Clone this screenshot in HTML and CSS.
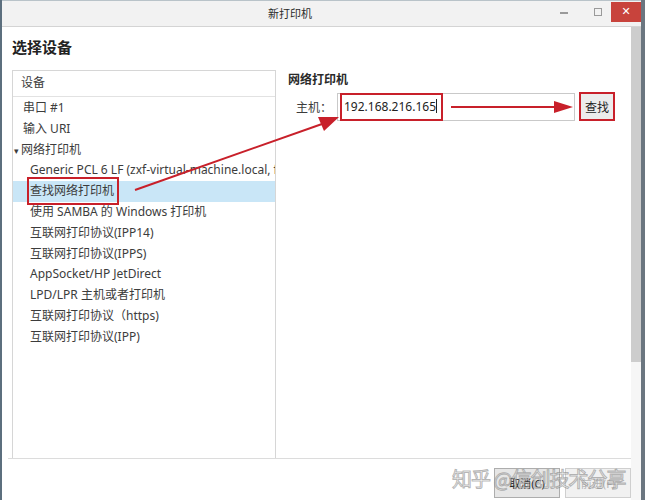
FILE: index.html
```html
<!DOCTYPE html>
<html lang="zh-CN">
<head>
	<meta charset="UTF-8">
	<title>新打印机</title>
	<link rel="stylesheet" href="styles.css">
</head>
<body>
<div class="window">
	<div class="titlebar">
		<span class="title">新打印机</span>
		<div class="controls">
			<span class="ctl ctl-min"></span>
			<span class="ctl ctl-max"></span>
			<span class="ctl ctl-close">✕</span>
		</div>
	</div>
	<div class="client">
		<div class="main">
			<h1 class="heading">选择设备</h1>
			<div class="panes">
				<div class="devices">
					<div class="devices-head">设备</div>
					<ul class="device-list">
						<li>串口 #1</li>
						<li>输入 URI</li>
						<li class="group"><span class="tri">▾</span>网络打印机</li>
						<li class="child">Generic PCL 6 LF (zxf-virtual-machine.local, fe</li>
						<li class="child selected"><span class="mark">查找网络打印机</span></li>
						<li class="child">使用 SAMBA 的 Windows 打印机</li>
						<li class="child">互联网打印协议(IPP14)</li>
						<li class="child">互联网打印协议(IPPS)</li>
						<li class="child">AppSocket/HP JetDirect</li>
						<li class="child">LPD/LPR 主机或者打印机</li>
						<li class="child">互联网打印协议（https)</li>
						<li class="child">互联网打印协议(IPP)</li>
					</ul>
				</div>
				<div class="detail">
					<h2 class="detail-tit">网络打印机</h2>
					<div class="host-row">
						<label class="host-label">主机：</label>
						<div class="host-input"><span class="host-mark">192.168.216.165<i class="caret"></i></span></div>
						<button class="find">查找</button>
					</div>
				</div>
			</div>
			<div class="footer">
				<button class="btn">取消(C)</button>
				<button class="btn btn-off">前进(F)</button>
			</div>
		</div>
		<div class="scrollbar"><div class="thumb"></div></div>
	</div>

	<!-- 标注箭头 -->
	<svg class="arrows" width="645" height="500" viewBox="0 0 645 500">
		<line x1="135" y1="190" x2="322" y2="124" stroke="#c8202a" stroke-width="2"/>
		<polygon points="339,117 318,117 324,131" fill="#c8202a"/>
		<line x1="451" y1="107" x2="556" y2="107" stroke="#c8202a" stroke-width="2"/>
		<polygon points="573,107 554,101 554,113" fill="#c8202a"/>
	</svg>
	<div class="watermark">知乎 @信创技术分享</div>
</div>
</body>
</html>
```

FILE: styles.css
```css
body,h1,h2,ul{
	margin: 0;
}
ul{
	padding: 0;
	list-style: none;
}
body{
	font: 12px/1.4 "Noto Sans", "Noto Sans CJK SC", sans-serif;
	color: #3c3c3c;
	background-color: #fff;
}
.window{
	position: relative;
	width: 645px;
	height: 500px;
	overflow: hidden;
	box-sizing: border-box;
	border-left: 2px solid #5c6f7e;
	border-right: 4px solid #6b7680;
	background-color: #fff;
}
.titlebar{
	display: flex;
	align-items: center;
	background-color: #f2f2f2;
	border-top: 1px solid #b9c3c9;
	border-bottom: 1px solid #d4d4d4;
	box-sizing: border-box;
	height: 27px;
}
.title{
	margin-left: 266px;
	font-size: 11px;
	color: #2b2b2b;
}
.controls{
	margin-left: auto;
	display: flex;
	align-items: flex-start;
	align-self: flex-start;
}
.ctl{
	display: block;
}
.ctl-min{
	width: 8px;
	height: 2px;
	background-color: #9a9a9a;
	margin: 11px 26px 0 0;
}
.ctl-max{
	width: 6px;
	height: 6px;
	border: 1px solid #9a9a9a;
	margin: 7px 9px 0 0;
}
.ctl-close{
	width: 30px;
	height: 20px;
	margin-top: 1px;
	background-color: #c8433c;
	color: #fff;
	font: bold 11px/20px "DejaVu Sans", sans-serif;
	text-align: center;
}

.client{
	display: flex;
	height: 473px;
}
.main{
	flex: 1;
	padding-left: 10px;
	display: flex;
	flex-direction: column;
}
.heading{
	font-size: 15px;
	line-height: 20px;
	font-weight: bold;
	color: #222;
	margin: 10px 0 13px;
}
.panes{
	display: flex;
	height: 389px;
	box-sizing: border-box;
	border-bottom: 1px solid #dcdcdc;
	margin-left: -4px;
	padding-left: 4px;
}
.devices{
	width: 264px;
	box-sizing: border-box;
	border: 1px solid #d6d6d6;
	border-bottom: none;
}
.devices-head{
	height: 25px;
	line-height: 24px;
	padding-left: 8px;
	border-bottom: 1px solid #e2e2e2;
}
.device-list{
	padding-top: 1px;
}
.device-list li{
	height: 20.8px;
	line-height: 20.8px;
	padding-left: 10px;
	white-space: nowrap;
	overflow: hidden;
}
.device-list .group{
	padding-left: 1px;
}
.tri{
	font-size: 9px;
	margin-right: 2px;
}
.device-list .child{
	padding-left: 17px;
}
.device-list .selected{
	background-color: #c9e6f7;
	overflow: visible;
}
.mark{
	border: 2px solid #c8202a;
	padding: 3px 3px 4px 1px;
	margin-left: -3px;
}

.detail{
	flex: 1;
	padding: 2px 0 0 12px;
}
.detail-tit{
	font-size: 12px;
	font-weight: bold;
	line-height: 16px;
	color: #2a2a2a;
}
.host-row{
	display: flex;
	align-items: flex-start;
	margin-top: 6px;
}
.host-label{
	width: 41px;
	padding: 6px 0 0 8px;
}
.host-input{
	width: 238px;
	height: 28px;
	box-sizing: border-box;
	border: 1px solid #c9c9c9;
	margin-top: -1px;
}
.host-mark{
	display: inline-block;
	height: 28px;
	box-sizing: border-box;
	margin: -1px 0 0 2px;
	padding: 4px 4px 0 2px;
	border: 2px solid #c8202a;
	color: #222;
}
.caret{
	display: inline-block;
	width: 1px;
	height: 14px;
	background-color: #222;
	vertical-align: -2px;
}
.find{
	width: 36px;
	height: 29px;
	margin: -2px 0 0 4px;
	padding: 0;
	border: 2px solid #c8202a;
	background-color: #ececec;
	font: 12px "Noto Sans", "Noto Sans CJK SC", sans-serif;
	color: #222;
}

.footer{
	display: flex;
	justify-content: flex-end;
	gap: 5px;
	padding: 9px 0 0;
}
.btn{
	width: 66px;
	height: 30px;
	border: 1px solid #adadad;
	background-color: #e6e6e6;
	font: 11px "Noto Sans", "Noto Sans CJK SC", sans-serif;
	color: #222;
	padding: 0;
}
.btn-off{
	border-color: #cfcfcf;
	background-color: #f1f1f1;
	color: #b5b5b5;
}

.scrollbar{
	width: 10px;
	background-color: #f6f6f6;
}
.thumb{
	height: 335px;
	background-color: #cdcdcd;
}

.arrows{
	position: absolute;
	left: -2px;
	top: 0;
	pointer-events: none;
}
.watermark{
	position: absolute;
	left: 450px;
	top: 464px;
	font: 20px "Noto Sans CJK SC", sans-serif;
	color: rgba(255,255,255,0.5);
	-webkit-text-stroke: 1px rgba(120,120,120,0.55);
	pointer-events: none;
	letter-spacing: -1px;
}
```
